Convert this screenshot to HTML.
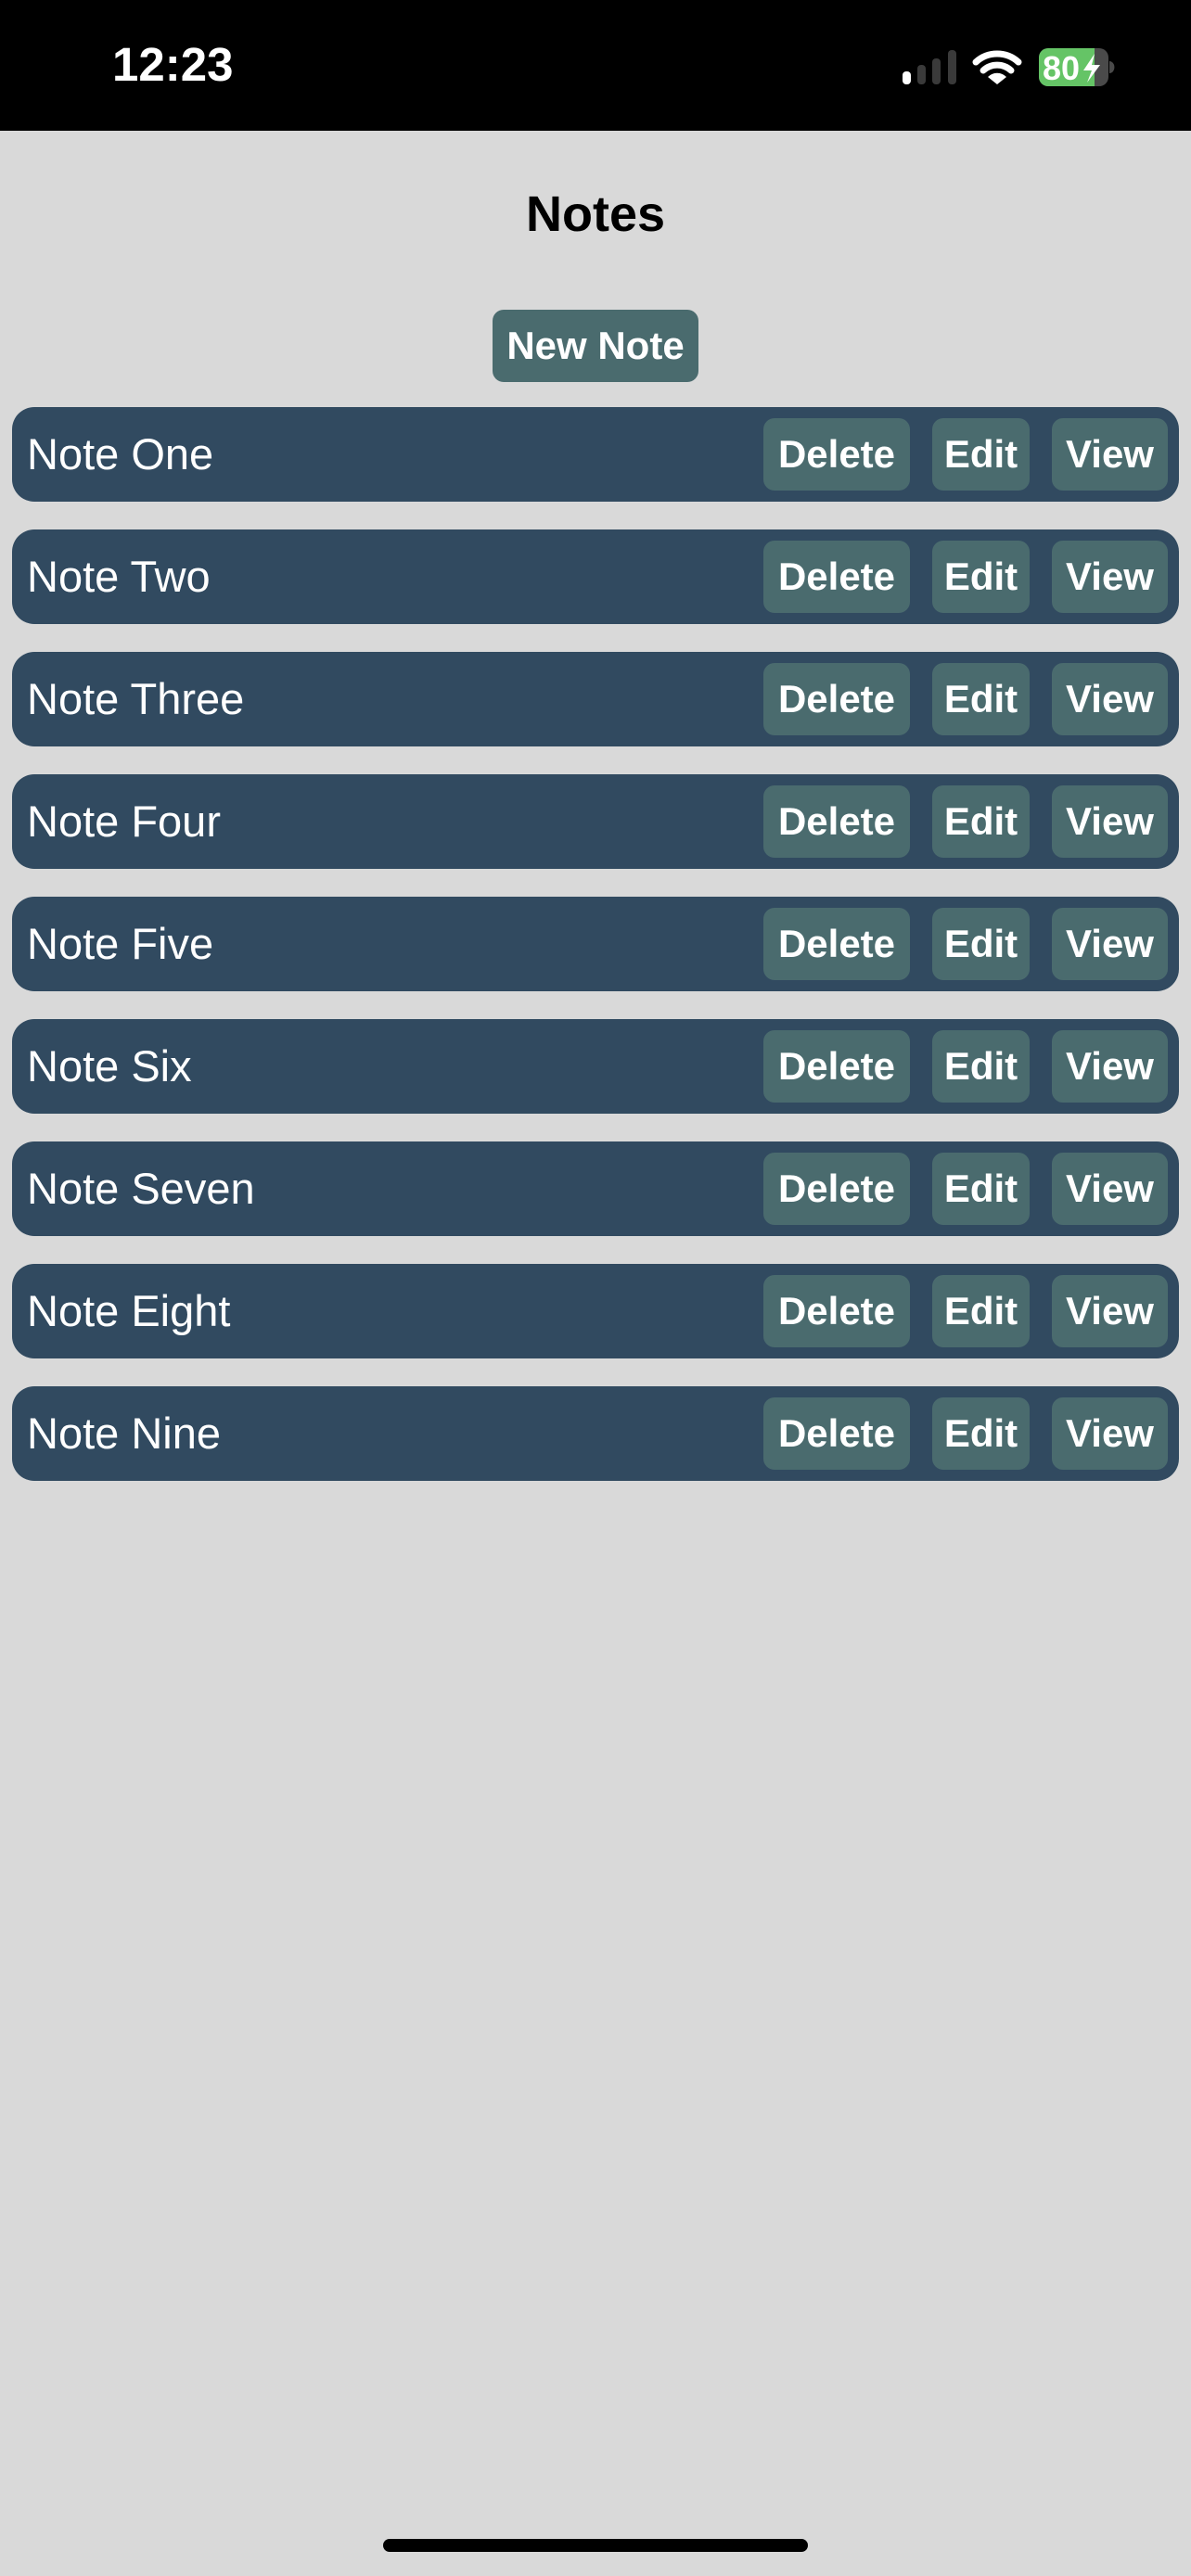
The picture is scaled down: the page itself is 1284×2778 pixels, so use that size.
<!DOCTYPE html>
<html><head><meta charset="utf-8"><style>
*{margin:0;padding:0;box-sizing:border-box}
body{width:1284px;height:2778px;background:#d9d9d9;font-family:"Liberation Sans",sans-serif;position:relative;overflow:hidden}
.sb{position:absolute;left:0;top:0;width:1284px;height:141px;background:#000}
.time{position:absolute;left:121px;top:40px;color:#fff;font-size:51px;font-weight:bold}
.title{position:absolute;left:0;width:1284px;top:200px;text-align:center;font-size:54px;font-weight:bold;color:#000}
.nn{position:absolute;left:531px;top:334px;width:222px;height:78px;background:#4a6b6e;border-radius:12px;color:#fff;font-weight:bold;font-size:42px;text-align:center;line-height:78px}
.row{position:absolute;left:13px;width:1258px;height:102px;background:#314a60;border-radius:24px}
.row .t{position:absolute;left:16px;top:0;line-height:102px;color:#fff;font-size:47px}
.b{position:absolute;top:12px;height:78px;background:#4a6b6e;border-radius:12px;color:#fff;font-weight:bold;font-size:42px;text-align:center;line-height:78px}
.home{position:absolute;left:413px;top:2738px;width:458px;height:14px;border-radius:7px;background:#000}
</style></head><body>
<div class="sb">
<div class="time">12:23</div>
<svg style="position:absolute;left:0;top:0" width="1284" height="141">
<rect x="973" y="77" width="9" height="14" rx="4" fill="#fff"/>
<rect x="989" y="70" width="9" height="21" rx="4" fill="#3a3a3a"/>
<rect x="1005" y="63" width="9" height="28" rx="4" fill="#3a3a3a"/>
<rect x="1022" y="54" width="9" height="37" rx="4" fill="#3a3a3a"/>
<path d="M1052 67 A34 34 0 0 1 1098 67" stroke="#fff" stroke-width="7" fill="none" stroke-linecap="round"/>
<path d="M1060 76 A22 22 0 0 1 1090 76" stroke="#fff" stroke-width="7" fill="none" stroke-linecap="round"/>
<path d="M1075 91 L1065 83 A14 14 0 0 1 1085 83 Z" fill="#fff"/>
<rect x="1120" y="52" width="75" height="41" rx="10" fill="#4a4a4a"/>
<path d="M1130 52 H1180 V93 H1130 A10 10 0 0 1 1120 83 V62 A10 10 0 0 1 1130 52Z" fill="#65c466"/>
<path d="M1196 66 A5 6 0 0 1 1196 79 Z" fill="#4a4a4a"/>
<text x="1124" y="86" fill="#fff" font-size="36" font-weight="bold" font-family="Liberation Sans">80</text>
<path d="M1180 58 L1168 76 H1177 L1172 89 L1186 70 H1177 Z" fill="#fff"/>
</svg>
</div>
<div class="title">Notes</div>
<div class="nn">New Note</div>

<div class="row" style="top:439px"><div class="t">Note One</div><div class="b" style="left:810px;width:158px">Delete</div><div class="b" style="left:992px;width:105px">Edit</div><div class="b" style="left:1121px;width:125px">View</div></div>
<div class="row" style="top:571px"><div class="t">Note Two</div><div class="b" style="left:810px;width:158px">Delete</div><div class="b" style="left:992px;width:105px">Edit</div><div class="b" style="left:1121px;width:125px">View</div></div>
<div class="row" style="top:703px"><div class="t">Note Three</div><div class="b" style="left:810px;width:158px">Delete</div><div class="b" style="left:992px;width:105px">Edit</div><div class="b" style="left:1121px;width:125px">View</div></div>
<div class="row" style="top:835px"><div class="t">Note Four</div><div class="b" style="left:810px;width:158px">Delete</div><div class="b" style="left:992px;width:105px">Edit</div><div class="b" style="left:1121px;width:125px">View</div></div>
<div class="row" style="top:967px"><div class="t">Note Five</div><div class="b" style="left:810px;width:158px">Delete</div><div class="b" style="left:992px;width:105px">Edit</div><div class="b" style="left:1121px;width:125px">View</div></div>
<div class="row" style="top:1099px"><div class="t">Note Six</div><div class="b" style="left:810px;width:158px">Delete</div><div class="b" style="left:992px;width:105px">Edit</div><div class="b" style="left:1121px;width:125px">View</div></div>
<div class="row" style="top:1231px"><div class="t">Note Seven</div><div class="b" style="left:810px;width:158px">Delete</div><div class="b" style="left:992px;width:105px">Edit</div><div class="b" style="left:1121px;width:125px">View</div></div>
<div class="row" style="top:1363px"><div class="t">Note Eight</div><div class="b" style="left:810px;width:158px">Delete</div><div class="b" style="left:992px;width:105px">Edit</div><div class="b" style="left:1121px;width:125px">View</div></div>
<div class="row" style="top:1495px"><div class="t">Note Nine</div><div class="b" style="left:810px;width:158px">Delete</div><div class="b" style="left:992px;width:105px">Edit</div><div class="b" style="left:1121px;width:125px">View</div></div>

<div class="home"></div>
</body></html>
